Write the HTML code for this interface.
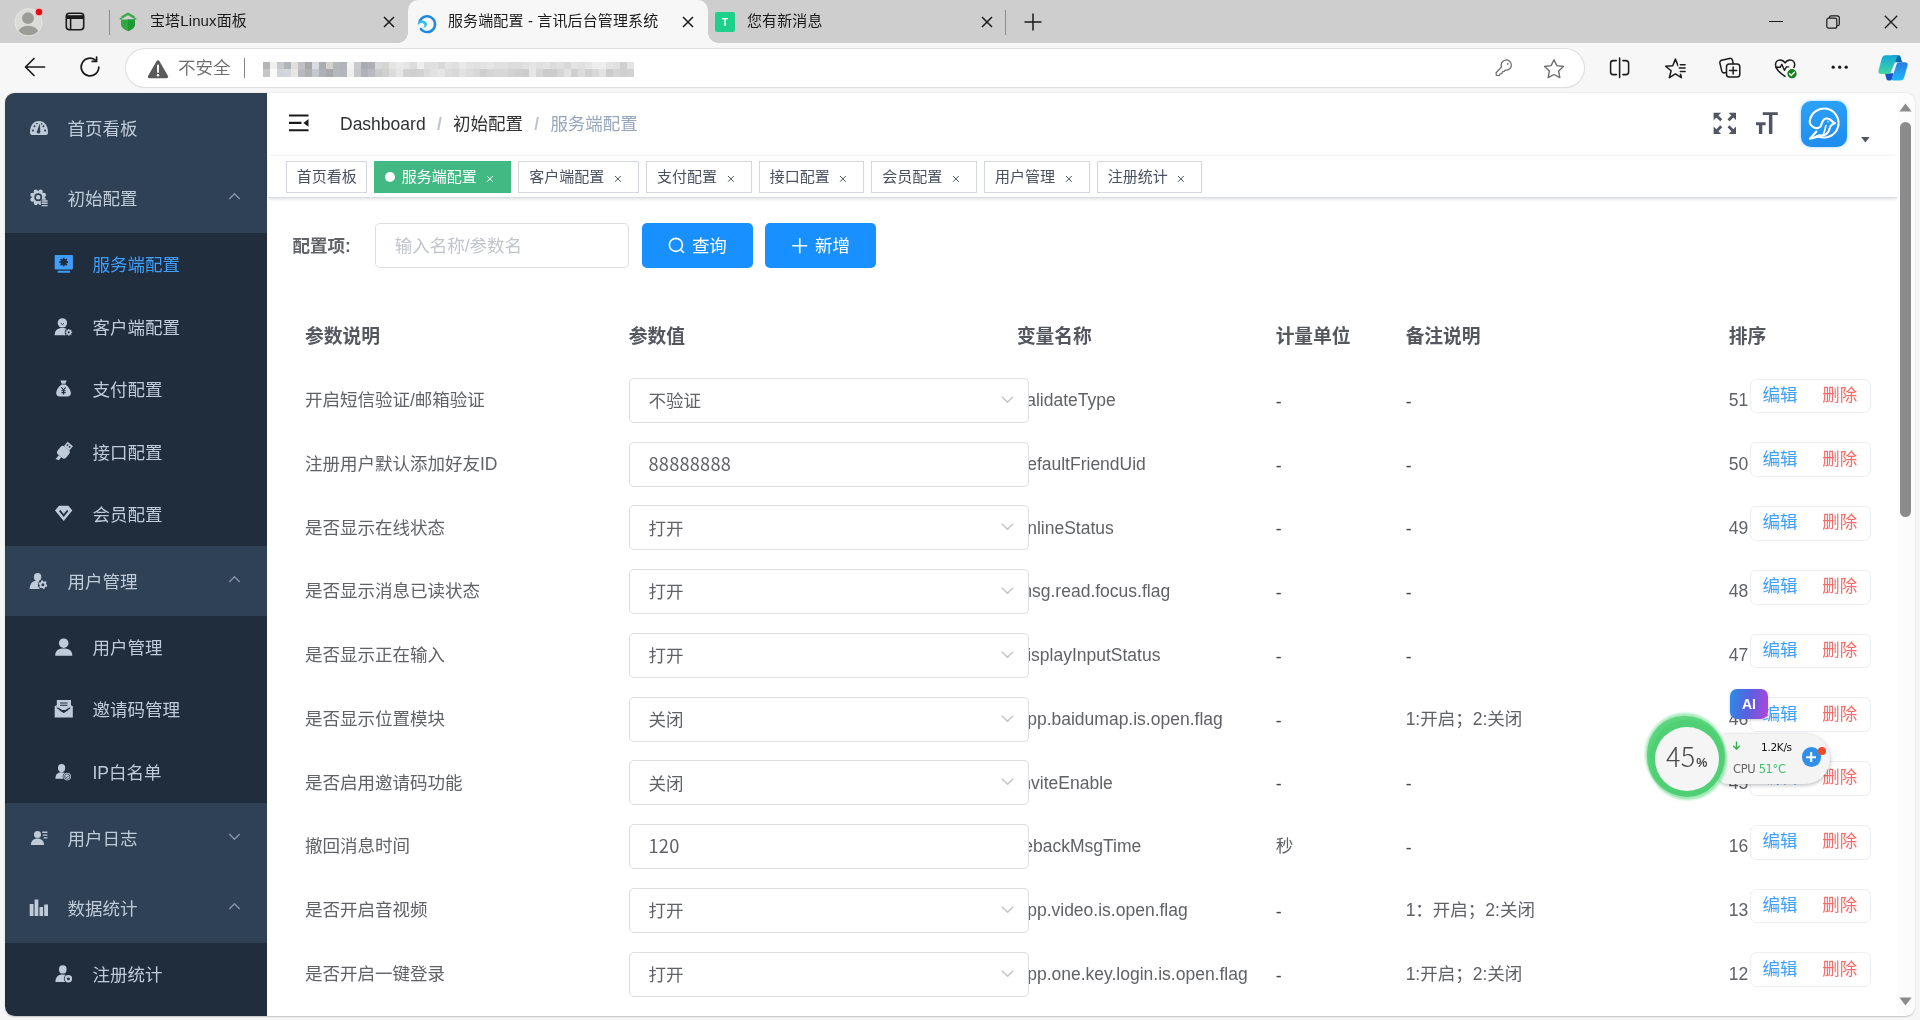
<!DOCTYPE html>
<html lang="zh-CN"><head><meta charset="utf-8"><title>服务端配置 - 言讯后台管理系统</title>
<style>
*{box-sizing:border-box;margin:0;padding:0}
html,body{width:1920px;height:1020px;overflow:hidden;background:#f6f6f6;font-family:"Liberation Sans","Noto Sans CJK SC",sans-serif;}
body{position:relative}
.abs{position:absolute}
/* ---------- browser chrome ---------- */
#tabstrip{position:absolute;left:0;top:0;width:1920px;height:43px;background:#cecece;will-change:transform}
#toolbar{position:absolute;left:0;top:43px;width:1920px;height:50px;background:#f7f7f7;will-change:transform}
.tabtitle{position:absolute;top:11px;font-size:15px;line-height:20px;color:#1b1b1b;white-space:nowrap;font-weight:400;letter-spacing:.12px}
#activetab{position:absolute;left:408px;top:0;width:300px;height:43px;background:#f7f7f7;border-radius:10px 10px 0 0}
#activetab:before,#activetab:after{content:"";position:absolute;bottom:0;width:10px;height:10px}
#activetab:before{left:-10px;background:radial-gradient(circle at 0 0,rgba(0,0,0,0) 9.5px,#f7f7f7 10px)}
#activetab:after{right:-10px;background:radial-gradient(circle at 100% 0,rgba(0,0,0,0) 9.5px,#f7f7f7 10px)}
#addr{will-change:transform;position:absolute;left:126px;top:49px;width:1458px;height:38px;border-radius:19px;background:#fff;box-shadow:0 0 0 1px #dedede, 0 1px 2px rgba(0,0,0,.06)}
#addr .unsafe{position:absolute;left:52px;top:7px;font-size:17.5px;line-height:24px;color:#6b6b6b;white-space:nowrap;font-weight:350}
#addr .sep{position:absolute;left:117.5px;top:9px;width:1px;height:20px;background:#858585}
#urlblur{position:absolute;left:137px;top:13px;width:371px;height:15px;filter:blur(.7px);overflow:hidden}
#urlblur i{position:absolute;display:block}
/* ---------- page ---------- */
#page{position:absolute;left:5px;top:93px;width:1910px;height:923px;border-radius:9.5px;overflow:hidden;background:#fff;box-shadow:0 .5px 1.5px rgba(0,0,0,.22)}
#z{position:absolute;left:0;top:0;width:1527.2px;height:737.6px;zoom:1.25;font-size:14px;color:#606266;font-weight:400;will-change:transform}
#side{position:absolute;left:0;top:0;width:209.4px;height:100%;background:#2f4155;color:#bfcbd9;font-weight:400}
.mi{position:relative;height:56px;line-height:56px;padding-left:20px;font-size:14px;white-space:nowrap}
.mi>span{position:relative;top:1px}
.mi svg.ic{display:inline-block;width:14px;height:14px;margin-right:16px;vertical-align:-2px;fill:currentColor;overflow:visible}
.sub{background:#1f2d3d}
.sub .mi{height:50px;line-height:50px;padding-left:40px}
.mi.act{color:#409eff}
.mi .arr{position:absolute;right:20px;top:50%;width:12px;height:12px;margin-top:-7px}
.mi .arr svg{display:block;width:12px;height:12px;fill:none;stroke:#8694a5;stroke-width:1.1}
#main{position:absolute;left:210px;top:0;width:1303.6px;height:100%;background:#fff}
#navbar{position:relative;height:50px;background:#fff;box-shadow:0 1px 4px rgba(0,21,41,.08)}
#bc{position:absolute;left:58px;top:0;line-height:50px;font-size:14px;white-space:nowrap;color:#303133}
#bc .s{margin:0 9px;color:#c0c4cc;font-weight:700}
#bc .last{color:#97a8be}
#tags{position:relative;height:34px;background:#fff;border-bottom:1px solid #d8dce5;box-shadow:0 1px 3px 0 rgba(0,0,0,.12),0 0 3px 0 rgba(0,0,0,.04);white-space:nowrap;font-size:0}
.tag{display:inline-block;position:relative;height:26px;line-height:24px;border:1px solid #d3d6dc;color:#495060;font-weight:400;background:#fff;padding:0 8px;font-size:12px;margin-left:5.73px;margin-top:4px;vertical-align:top}
.tag:first-child{margin-left:15px;padding:0 7.6px}
.tag.on{background:#42b983;color:#fff;border-color:#42b983}
.tag.on:before{content:"";background:#fff;display:inline-block;width:8px;height:8px;border-radius:50%;position:relative;margin-right:5px;top:0px}
.tag .t{position:relative;top:.4px}
.tag .x{display:inline-block;width:15.8px;height:16px;vertical-align:-4.5px;margin-left:3px;position:relative}
.tag .x svg{position:absolute;left:5.6px;top:7.2px;width:4.6px;height:4.6px;stroke:#495060;stroke-width:.85;fill:none;overflow:visible}
.tag.on .x svg{stroke:#fff}
#app{position:relative;padding:20px}
#form{position:relative;height:36px;white-space:nowrap}
#form .lbl{position:absolute;left:0;top:1px;line-height:36px;font-size:14px;font-weight:700;color:#606266}
#form .inp{position:absolute;left:66px;top:0;width:203px;height:36px;border:1px solid #dcdee3;border-radius:4px;line-height:34px;padding-top:1px;padding-left:15px;color:#c0c4cc;font-size:14px}
.btn{position:absolute;top:0;height:36px;width:89px;border-radius:4px;background:#1890ff;color:#fff;font-size:14px;line-height:36px;padding-top:.8px;text-align:center}
.btn svg{display:inline-block;vertical-align:-2px;margin-right:5px;width:14px;height:14px;fill:none;stroke:#fff;stroke-width:1.3}
/* table */
#tbl{position:absolute;left:20px;top:167.9px;width:1263.6px}
.th{position:absolute;top:0;height:53px;line-height:53px;padding-top:1.2px;font-weight:700;font-size:15px;color:#54575e;white-space:nowrap}
.row{position:absolute;left:0;width:100%;height:51px}
.c{position:absolute;top:0;height:51px;line-height:51px;white-space:nowrap;font-size:14px;color:#606266}
.inbox{position:absolute;left:269px;top:7px;width:320.4px;height:36px;border:1px solid #dcdee3;border-radius:4px;background:#fff;line-height:34px;padding-top:1px;padding-left:15px;font-size:14px;color:#606266}
.inbox.num{font-family:"Noto Sans CJK SC",sans-serif;font-size:14.6px;padding-top:0;line-height:32.4px;letter-spacing:.15px}
.c.hy{padding-top:1.3px;color:#474747}
.inbox svg{position:absolute;right:10.6px;top:10.3px;width:12px;height:12px;fill:none;stroke:#c2c4ca;stroke-width:1.1}
.ops{position:absolute;left:1165.6px;top:7.6px;width:97.4px;height:27.8px;border:1px solid #ebeef5;border-radius:5px;background:#fff;font-size:14px;line-height:22px;white-space:nowrap}
.ops .e{position:absolute;left:9.6px;top:1.7px;color:#409eff}
.ops .d{position:absolute;left:57.4px;top:1.7px;color:#f56c6c}
</style></head>
<body>
<div id="tabstrip">
  <!-- profile -->
  <svg class="abs" style="left:12px;top:5px;width:34px;height:34px" viewBox="12 4 34 34"><circle cx="28.5" cy="21.2" r="13.6" fill="#dbdbd8" stroke="#e6e6e3" stroke-width="1"/><clipPath id="pc"><circle cx="28.5" cy="21.2" r="13.1"/></clipPath><circle cx="28" cy="17.2" r="5.9" fill="#9b9b98"/><ellipse cx="28.2" cy="31.2" rx="10" ry="6.4" fill="#9b9b98" clip-path="url(#pc)"/><circle cx="39" cy="11" r="3.9" fill="#e50914" stroke="#f3dada" stroke-width=".9"/></svg>
  <!-- tab actions -->
  <svg class="abs" style="left:65px;top:12px;width:20px;height:19px" viewBox="0 0 20 19" fill="none" stroke="#1b1b1b" stroke-width="1.6"><rect x="1.3" y="1.3" width="17.4" height="16.4" rx="3.2"/><path d="M1.3 6.3h17.4M5.6 6.3v11.4"/><path d="M2 3.2h16v3H2z" fill="#1b1b1b" stroke="none"/></svg>
  <div class="abs" style="left:109px;top:10px;width:1px;height:25px;background:#8d8d8d"></div>
  <!-- tab1 -->
  <svg class="abs" style="left:118px;top:11px;width:20px;height:22px" viewBox="118 11 20 22"><path d="M119.8 19.1l8.2-4.6 8.2 4.6M121.5 16.8l6.5-3.6 6.5 3.6" fill="none" stroke="#3aa84a" stroke-width="1.3"/><path d="M121 19.6h14v4.7c0 3.3-3.5 5.6-7 6.9-3.5-1.3-7-3.6-7-6.9z" fill="#2fa843"/><path d="M128 19.6h7v4.7c0 3.3-3.5 5.6-7 6.9z" fill="#1f9838"/></svg>
  <div class="tabtitle" style="left:150px">宝塔Linux面板</div>
  <svg class="abs" style="left:383px;top:16px;width:12px;height:12px" viewBox="0 0 12 12"><path d="M1 1l10 10M11 1L1 11" stroke="#1b1b1b" stroke-width="1.5"/></svg>
  <!-- active tab -->
  <div id="activetab"></div>
  <svg class="abs" style="left:416px;top:12.5px;width:22px;height:22px" viewBox="0 0 20 20" fill="none"><path d="M3.2 8.2A7.2 7.2 0 1 1 4.4 14.6" stroke="#1b87e6" stroke-width="2.2" stroke-linecap="round"/><path d="M1.6 9.2c1.5-2.2 4-3 6.2-2 1.8.8 2.6 2.6 2 4.2-.5 1.4-2 2.2-3.6 1.9 1.2-.4 1.8-1.6 1.3-2.7-.5-1.2-2-1.7-3.4-1.3-1 .3-1.9 1-2.5 1.9z" fill="#35c1f1"/></svg>
  <div class="tabtitle" style="left:448px">服务端配置 - 言讯后台管理系统</div>
  <svg class="abs" style="left:682px;top:16px;width:12px;height:12px" viewBox="0 0 12 12"><path d="M1 1l10 10M11 1L1 11" stroke="#1b1b1b" stroke-width="1.5"/></svg>
  <!-- tab3 -->
  <div class="abs" style="left:715px;top:12px;width:20px;height:20px;border-radius:2px;background:#1ed18b;color:#fff;font-size:10px;font-weight:700;line-height:21px;text-align:center">T</div>
  <div class="tabtitle" style="left:747px">您有新消息</div>
  <svg class="abs" style="left:981px;top:16px;width:12px;height:12px" viewBox="0 0 12 12"><path d="M1 1l10 10M11 1L1 11" stroke="#1b1b1b" stroke-width="1.5"/></svg>
  <div class="abs" style="left:1005px;top:10px;width:1px;height:25px;background:#8d8d8d"></div>
  <svg class="abs" style="left:1024px;top:13px;width:18px;height:18px" viewBox="0 0 18 18"><path d="M9 .5v17M.5 9h17" stroke="#1b1b1b" stroke-width="1.5"/></svg>
  <!-- window controls -->
  <div class="abs" style="left:1769px;top:21px;width:14px;height:1.3px;background:#1b1b1b"></div>
  <svg class="abs" style="left:1826px;top:15px;width:14px;height:14px" viewBox="0 0 14 14" fill="none" stroke="#1b1b1b" stroke-width="1.2"><rect x=".8" y="3.2" width="10" height="10" rx="2"/><path d="M3.4 3V2.6C3.4 1.6 4.2.8 5.2.8h6c1.2 0 2.1.9 2.1 2.1v6c0 1-.8 1.8-1.8 1.8h-.4"/></svg>
  <svg class="abs" style="left:1884px;top:15px;width:14px;height:14px" viewBox="0 0 14 14"><path d="M.8.8l12.4 12.4M13.2.8L.8 13.2" stroke="#1b1b1b" stroke-width="1.3"/></svg>
</div>
<div id="toolbar">
  <svg class="abs" style="left:24px;top:14px;width:22px;height:20px" viewBox="0 0 22 20" fill="none" stroke="#1b1b1b" stroke-width="1.7" stroke-linecap="round" stroke-linejoin="round"><path d="M20.5 10H2M10 1.5L1.5 10l8.5 8.5"/></svg>
  <svg class="abs" style="left:79px;top:13px;width:22px;height:22px" viewBox="0 0 22 22" fill="none" stroke="#1b1b1b" stroke-width="1.7" stroke-linecap="round" stroke-linejoin="round"><path d="M19.8 11a8.8 8.8 0 1 1-2.8-6.4"/><path d="M17.6 1v4.4h-4.4" /></svg>
  <!-- right icons -->
  <svg class="abs" style="left:1600px;top:10px;width:40px;height:30px" viewBox="1600 53 40 30" fill="none" stroke="#1b1b1b" stroke-width="1.55" stroke-linecap="round"><path d="M1616.3 60.6h-3a2.7 2.7 0 0 0-2.7 2.7v8.6a2.7 2.7 0 0 0 2.7 2.7h3M1622.9 60.6h3a2.7 2.7 0 0 1 2.7 2.7v8.6a2.7 2.7 0 0 1-2.7 2.7h-3M1619.6 58v19.4"/></svg>
  <svg class="abs" style="left:1655px;top:10px;width:40px;height:30px" viewBox="1655 53 40 30" fill="none" stroke="#1b1b1b" stroke-width="1.5" stroke-linejoin="round" stroke-linecap="round"><path d="M1675.40 59.10L1678.05 65.76L1685.20 66.22L1679.68 70.79L1681.45 77.73L1675.40 73.90L1669.35 77.73L1671.12 70.79L1665.60 66.22L1672.75 65.76Z"/><path d="M1678.3 62.3h9v11.4h-9z" fill="#f7f7f7" stroke="none"/><path d="M1680.3 64.7h4.8M1679.3 68.1h5.8M1680.3 71.5h4.8"/></svg>
  <svg class="abs" style="left:1710px;top:10px;width:40px;height:30px" viewBox="1710 53 40 30" fill="none" stroke="#1b1b1b" stroke-width="1.5" stroke-linecap="round" stroke-linejoin="round"><path d="M1726.3 72.4l-1.7.4a2.3 2.3 0 0 1-2.8-1.7l-1.9-8a2.3 2.3 0 0 1 1.7-2.8l8-1.9a2.3 2.3 0 0 1 2.8 1.7l.8 3.3"/><rect x="1726.5" y="63.9" width="13.3" height="13.1" rx="2.8"/><path d="M1733.15 66.9v7.2M1729.55 70.5h7.2"/></svg>
  <svg class="abs" style="left:1765px;top:10px;width:40px;height:30px" viewBox="1765 53 40 30" fill="none" stroke="#1b1b1b" stroke-width="1.5" stroke-linecap="round" stroke-linejoin="round"><path d="M1785.1 76.3c-4-2.6-9.6-7.2-9.6-11.6 0-2.7 2-4.8 4.6-4.8 2 0 3.8 1.2 5 3 1.2-1.8 3-3 5-3 2.6 0 4.6 2.1 4.6 4.8 0 1-.3 2-.8 3"/><path d="M1776 67.3h4.2l1.6-3 2.6 6 2-3.4h2.2" stroke-width="1.4"/><circle cx="1792" cy="73.7" r="5.2" fill="#13801d" stroke="#f7f7f7" stroke-width="1.1"/><path d="M1789.6 73.8l1.7 1.7 3.1-3.3" stroke="#fff" stroke-width="1.4"/></svg>
  <svg class="abs" style="left:1825px;top:10px;width:30px;height:30px" viewBox="1825 53 30 30"><circle cx="1833.2" cy="67.2" r="1.65" fill="#1b1b1b"/><circle cx="1839.7" cy="67.2" r="1.65" fill="#1b1b1b"/><circle cx="1846.2" cy="67.2" r="1.65" fill="#1b1b1b"/></svg>
  <!-- copilot -->
  <svg class="abs" style="left:1874px;top:9px;width:38px;height:32px" viewBox="1874 52 38 32"><defs><linearGradient id="cpa" x1="0" y1="0" x2="0" y2="1"><stop offset="0" stop-color="#12a6da"/><stop offset="1" stop-color="#41d8a0"/></linearGradient><linearGradient id="cpb" x1="0" y1="0" x2="0" y2="1"><stop offset="0" stop-color="#2b7de0"/><stop offset="1" stop-color="#1cb6f6"/></linearGradient></defs>
  <path d="M1892.5 55.2h6c1.2 0 1.8.7 2.1 1.7l1 3.6c.3 1 1 1.8 2.4 1.8h-10l-3.5-2z" fill="#0b6ba8"/>
  <path d="M1884.9 73.3h8.6l-1.3 5.2c-.4 1.4-1.3 2-2.6 2h-1c-1.2 0-1.9-.6-2.2-1.7z" fill="#1a4fc6"/>
  <path d="M1885.8 55.2h10.4c1 0 1.4.6 1.1 1.5l-6.3 15c-.6 1.5-1.6 2.2-3.1 2.2h-6.9c-2 0-3-1.2-2.5-3.2l3.3-12.2c.6-2.1 1.8-3.3 4-3.3z" fill="url(#cpa)"/>
  <path d="M1899.2 62.3h5.8c2.2 0 3.1 1.3 2.5 3.4l-3.4 11.8c-.6 2-1.7 3-3.8 3h-7.3c-1 0-1.4-.7-1.1-1.7l4.6-14.3c.5-1.5 1.4-2.2 2.7-2.2z" fill="url(#cpb)"/></svg>
</div>
<div id="addr">
  <svg class="abs" style="left:21px;top:10px;width:22px;height:20px" viewBox="0 0 22 20"><path d="M11 1.2c.7 0 1.2.4 1.5 1L21 17c.6 1.1-.2 2.3-1.5 2.3h-17C1.2 19.3.4 18.1 1 17L9.5 2.2c.3-.6.8-1 1.5-1z" fill="#5a5a5a"/><path d="M11 6.5v6.5" stroke="#fff" stroke-width="2" stroke-linecap="round"/><circle cx="11" cy="16.2" r="1.2" fill="#fff"/></svg>
  <div class="unsafe">不安全</div>
  <div class="sep"></div>
  <div id="urlblur">
    <i style="left:0px;top:0;width:7.1px;height:7.6px;background:#b5b5b8"></i><i style="left:0px;top:7.4px;width:7.1px;height:7.6px;background:#c6c6c8"></i><i style="left:7px;top:0;width:7.1px;height:7.6px;background:#f0f0ee"></i><i style="left:7px;top:7.4px;width:7.1px;height:7.6px;background:#fafafa"></i><i style="left:14px;top:0;width:7.1px;height:7.6px;background:#c5c8cc"></i><i style="left:14px;top:7.4px;width:7.1px;height:7.6px;background:#d0d3d8"></i><i style="left:21px;top:0;width:7.1px;height:7.6px;background:#b0b3b8"></i><i style="left:21px;top:7.4px;width:7.1px;height:7.6px;background:#d3d6db"></i><i style="left:28px;top:0;width:7.1px;height:7.6px;background:#e0deda"></i><i style="left:28px;top:7.4px;width:7.1px;height:7.6px;background:#e8e6e0"></i><i style="left:35px;top:0;width:7.1px;height:7.6px;background:#c0c0c4"></i><i style="left:35px;top:7.4px;width:7.1px;height:7.6px;background:#b8babf"></i><i style="left:42px;top:0;width:7.1px;height:7.6px;background:#a8a8a8"></i><i style="left:42px;top:7.4px;width:7.1px;height:7.6px;background:#b0b0ae"></i><i style="left:49px;top:0;width:7.1px;height:7.6px;background:#d8dce2"></i><i style="left:49px;top:7.4px;width:7.1px;height:7.6px;background:#c5c9cf"></i><i style="left:56px;top:0;width:7.1px;height:7.6px;background:#a9adb3"></i><i style="left:56px;top:7.4px;width:7.1px;height:7.6px;background:#aeb1b8"></i><i style="left:63px;top:0;width:7.1px;height:7.6px;background:#d5d3d0"></i><i style="left:63px;top:7.4px;width:7.1px;height:7.6px;background:#a9a9ab"></i><i style="left:70px;top:0;width:7.1px;height:7.6px;background:#b3b6bb"></i><i style="left:70px;top:7.4px;width:7.1px;height:7.6px;background:#b5b8bd"></i><i style="left:77px;top:0;width:7.1px;height:7.6px;background:#b0b4ba"></i><i style="left:77px;top:7.4px;width:7.1px;height:7.6px;background:#b3b7bc"></i><i style="left:84px;top:0;width:7.1px;height:7.6px;background:#f3f3f0"></i><i style="left:84px;top:7.4px;width:7.1px;height:7.6px;background:#efefed"></i><i style="left:91px;top:0;width:7.1px;height:7.6px;background:#c8cacd"></i><i style="left:91px;top:7.4px;width:7.1px;height:7.6px;background:#c5c7cc"></i><i style="left:98px;top:0;width:7.1px;height:7.6px;background:#a9abb3"></i><i style="left:98px;top:7.4px;width:7.1px;height:7.6px;background:#b0b2b8"></i><i style="left:105px;top:0;width:7.1px;height:7.6px;background:#aeb0b6"></i><i style="left:105px;top:7.4px;width:7.1px;height:7.6px;background:#b8babf"></i><i style="left:112px;top:0;width:7.1px;height:7.6px;background:#d8dadd"></i><i style="left:112px;top:7.4px;width:7.1px;height:7.6px;background:#c8cacc"></i><i style="left:119px;top:0;width:7.1px;height:7.6px;background:#d5d5d3"></i><i style="left:119px;top:7.4px;width:7.1px;height:7.6px;background:#d0d0ce"></i><i style="left:126px;top:0;width:7.1px;height:7.6px;background:#e5e5e5"></i><i style="left:126px;top:7.4px;width:7.1px;height:7.6px;background:#dcdcdc"></i><i style="left:133px;top:0;width:7.1px;height:7.6px;background:#eaeaea"></i><i style="left:133px;top:7.4px;width:7.1px;height:7.6px;background:#e6e6e6"></i><i style="left:140px;top:0;width:7.1px;height:7.6px;background:#e6e6e6"></i><i style="left:140px;top:7.4px;width:7.1px;height:7.6px;background:#d2d2d2"></i><i style="left:147px;top:0;width:7.1px;height:7.6px;background:#dcdcdc"></i><i style="left:147px;top:7.4px;width:7.1px;height:7.6px;background:#cfcfcf"></i><i style="left:154px;top:0;width:7.1px;height:7.6px;background:#eeeeee"></i><i style="left:154px;top:7.4px;width:7.1px;height:7.6px;background:#d2d2d2"></i><i style="left:161px;top:0;width:7.1px;height:7.6px;background:#e0e0e0"></i><i style="left:161px;top:7.4px;width:7.1px;height:7.6px;background:#dcdcdc"></i><i style="left:168px;top:0;width:7.1px;height:7.6px;background:#e0e0e0"></i><i style="left:168px;top:7.4px;width:7.1px;height:7.6px;background:#e2e2e2"></i><i style="left:175px;top:0;width:7.1px;height:7.6px;background:#d8d8d8"></i><i style="left:175px;top:7.4px;width:7.1px;height:7.6px;background:#e6e6e6"></i><i style="left:182px;top:0;width:7.1px;height:7.6px;background:#e3e3e3"></i><i style="left:182px;top:7.4px;width:7.1px;height:7.6px;background:#dcdcdc"></i><i style="left:189px;top:0;width:7.1px;height:7.6px;background:#e0e0e0"></i><i style="left:189px;top:7.4px;width:7.1px;height:7.6px;background:#d8d8d8"></i><i style="left:196px;top:0;width:7.1px;height:7.6px;background:#eaeaea"></i><i style="left:196px;top:7.4px;width:7.1px;height:7.6px;background:#e2e2e2"></i><i style="left:203px;top:0;width:7.1px;height:7.6px;background:#e3e3e3"></i><i style="left:203px;top:7.4px;width:7.1px;height:7.6px;background:#dcdcdc"></i><i style="left:210px;top:0;width:7.1px;height:7.6px;background:#e0e0e0"></i><i style="left:210px;top:7.4px;width:7.1px;height:7.6px;background:#d8d8d8"></i><i style="left:217px;top:0;width:7.1px;height:7.6px;background:#e3e3e3"></i><i style="left:217px;top:7.4px;width:7.1px;height:7.6px;background:#cfcfcf"></i><i style="left:224px;top:0;width:7.1px;height:7.6px;background:#e6e6e6"></i><i style="left:224px;top:7.4px;width:7.1px;height:7.6px;background:#d5d5d5"></i><i style="left:231px;top:0;width:7.1px;height:7.6px;background:#e0e0e0"></i><i style="left:231px;top:7.4px;width:7.1px;height:7.6px;background:#d8d8d8"></i><i style="left:238px;top:0;width:7.1px;height:7.6px;background:#e0e0e0"></i><i style="left:238px;top:7.4px;width:7.1px;height:7.6px;background:#d8d8d8"></i><i style="left:245px;top:0;width:7.1px;height:7.6px;background:#dcdcdc"></i><i style="left:245px;top:7.4px;width:7.1px;height:7.6px;background:#d2d2d2"></i><i style="left:252px;top:0;width:7.1px;height:7.6px;background:#dcdcdc"></i><i style="left:252px;top:7.4px;width:7.1px;height:7.6px;background:#cfcfcf"></i><i style="left:259px;top:0;width:7.1px;height:7.6px;background:#e0e0e0"></i><i style="left:259px;top:7.4px;width:7.1px;height:7.6px;background:#cccccc"></i><i style="left:266px;top:0;width:7.1px;height:7.6px;background:#e6e6e6"></i><i style="left:266px;top:7.4px;width:7.1px;height:7.6px;background:#e6e6e6"></i><i style="left:273px;top:0;width:7.1px;height:7.6px;background:#e0e0e0"></i><i style="left:273px;top:7.4px;width:7.1px;height:7.6px;background:#d5d5d5"></i><i style="left:280px;top:0;width:7.1px;height:7.6px;background:#e3e3e3"></i><i style="left:280px;top:7.4px;width:7.1px;height:7.6px;background:#cccccc"></i><i style="left:287px;top:0;width:7.1px;height:7.6px;background:#dcdcdc"></i><i style="left:287px;top:7.4px;width:7.1px;height:7.6px;background:#cccccc"></i><i style="left:294px;top:0;width:7.1px;height:7.6px;background:#e0e0e0"></i><i style="left:294px;top:7.4px;width:7.1px;height:7.6px;background:#d5d5d5"></i><i style="left:301px;top:0;width:7.1px;height:7.6px;background:#d8d8d8"></i><i style="left:301px;top:7.4px;width:7.1px;height:7.6px;background:#e2e2e2"></i><i style="left:308px;top:0;width:7.1px;height:7.6px;background:#e3e3e3"></i><i style="left:308px;top:7.4px;width:7.1px;height:7.6px;background:#cfcfcf"></i><i style="left:315px;top:0;width:7.1px;height:7.6px;background:#e0e0e0"></i><i style="left:315px;top:7.4px;width:7.1px;height:7.6px;background:#dcdcdc"></i><i style="left:322px;top:0;width:7.1px;height:7.6px;background:#e6e6e6"></i><i style="left:322px;top:7.4px;width:7.1px;height:7.6px;background:#cfcfcf"></i><i style="left:329px;top:0;width:7.1px;height:7.6px;background:#eeeeee"></i><i style="left:329px;top:7.4px;width:7.1px;height:7.6px;background:#d8d8d8"></i><i style="left:336px;top:0;width:7.1px;height:7.6px;background:#eeeeee"></i><i style="left:336px;top:7.4px;width:7.1px;height:7.6px;background:#e2e2e2"></i><i style="left:343px;top:0;width:7.1px;height:7.6px;background:#e3e3e3"></i><i style="left:343px;top:7.4px;width:7.1px;height:7.6px;background:#cccccc"></i><i style="left:350px;top:0;width:7.1px;height:7.6px;background:#e0e0e0"></i><i style="left:350px;top:7.4px;width:7.1px;height:7.6px;background:#d5d5d5"></i><i style="left:357px;top:0;width:7.1px;height:7.6px;background:#d0d0d0"></i><i style="left:357px;top:7.4px;width:7.1px;height:7.6px;background:#cfcfd2"></i><i style="left:364px;top:0;width:7.1px;height:7.6px;background:#e4e4e4"></i><i style="left:364px;top:7.4px;width:7.1px;height:7.6px;background:#d2d2d2"></i>
  </div>
  <svg class="abs" style="left:1360px;top:4px;width:30px;height:30px" viewBox="1360 4 30 30" fill="none" stroke="#6e6e6e" stroke-width="1.25" stroke-linecap="round" stroke-linejoin="round"><path d="M1375.5 18L1370.1 23.8 1370.3 26.3 1373.5 26.5 1374.1 24.8 1375.8 24.7 1376.4 22.9 1378.2 22.4 1379.2 21.1A5.1 5.1 0 1 0 1375.5 18z"/><circle cx="1381.7" cy="14.9" r=".85" fill="#6e6e6e" stroke="none"/></svg>
  <svg class="abs" style="left:1413px;top:5px;width:30px;height:30px" viewBox="1413 5 30 30" fill="none" stroke="#6e6e6e" stroke-width="1.4" stroke-linejoin="round"><path d="M1428.00 10.70L1430.88 16.64L1437.42 17.54L1432.66 22.11L1433.82 28.61L1428.00 25.50L1422.18 28.61L1423.34 22.11L1418.58 17.54L1425.12 16.64Z"/></svg>
</div>

<div id="page"><div id="z"><div id="side"><div class="mi "><svg class="ic" viewBox="0 0 17.5 17.5" ><path d="M0 13.5C0 6.2 3.6 2 9 2s9 4.2 9 11.500000c0 1.5-.8 2.5-2 2.5H2c-1.2 0-2-1-2-2.5z"/><g fill="#304156"><circle cx="2.9" cy="11.6" r="1.05"/><circle cx="4.5" cy="7.2" r="1.05"/><circle cx="13.5" cy="7.2" r="1.05"/><circle cx="15.1" cy="11.6" r="1.05"/><circle cx="7" cy="4.6" r=".8"/><circle cx="11.6" cy="4.9" r=".8"/><path d="M9.9 4.300000L10.3 12.500000a1.7 1.7 0 1 1-3.2-.5z"/></g></svg><span>首页看板</span></div><div class="mi "><svg class="ic" viewBox="0 0 17.5 17.5" ><circle cx="8.2" cy="8.3" r="6.3"/><circle cx="13.93" cy="10.67" r="2.15"/><circle cx="10.57" cy="14.03" r="2.15"/><circle cx="5.83" cy="14.03" r="2.15"/><circle cx="2.47" cy="10.67" r="2.15"/><circle cx="2.47" cy="5.93" r="2.15"/><circle cx="5.83" cy="2.57" r="2.15"/><circle cx="10.57" cy="2.57" r="2.15"/><circle cx="13.93" cy="5.93" r="2.15"/><circle cx="8.2" cy="8.3" r="3.1" fill="none" stroke="#304156" stroke-width="1.7"/><path d="M10.8 10.700000H18.500000V18H10.800000z" fill="#304156"/><path d="M11.7 11.300000h5.900000v1.400000h-5.900000zM11.7 13.600000h5.900000v1.400000h-5.900000zM11.7 15.900000h5.900000v1.400000h-5.900000z"/></svg><span>初始配置</span><span class="arr"><svg viewBox="0 0 12 12"><path d="M1.8 8L6 3.8 10.2 8"/></svg></span></div><div class="sub"><div class="mi act"><svg class="ic" viewBox="0 0 17.5 17.5" ><rect x="-.3" y="0" width="18.2" height="14.4" rx=".8"/><rect x="2.6" y="15.8" width="12.4" height="1.9" rx=".3"/><path d="M13.13 6.31L13.13 7.89L11.80 7.91L11.46 8.72L12.39 9.67L11.27 10.79L10.32 9.86L9.51 10.20L9.49 11.53L7.91 11.53L7.89 10.20L7.08 9.86L6.13 10.79L5.01 9.67L5.94 8.72L5.60 7.91L4.27 7.89L4.27 6.31L5.60 6.29L5.94 5.48L5.01 4.53L6.13 3.41L7.08 4.34L7.89 4.00L7.91 2.67L9.49 2.67L9.51 4.00L10.32 4.34L11.27 3.41L12.39 4.53L11.46 5.48L11.80 6.29Z" fill="#1f2d3d"/></svg><span>服务端配置</span></div><div class="mi "><svg class="ic" viewBox="0 0 17.5 17.5" ><circle cx="7.4" cy="4.9" r="4.7"/><path d="M-.3 17.200000C-.3 12.6 2.5 10.1 7.4 10.100000c4.6 0 7.6 1.9 9.4 7.100000z"/><path d="M5.8 5.300000l1.6 1.3 1.6-1.3" fill="none" stroke="#1f2d3d" stroke-width=".9"/><circle cx="13.8" cy="14.3" r="4" fill="#1f2d3d"/><path d="M17.15 13.70L17.15 14.90L16.22 14.93L15.96 15.56L16.59 16.24L15.74 17.09L15.06 16.46L14.43 16.72L14.40 17.65L13.20 17.65L13.17 16.72L12.54 16.46L11.86 17.09L11.01 16.24L11.64 15.56L11.38 14.93L10.45 14.90L10.45 13.70L11.38 13.67L11.64 13.04L11.01 12.36L11.86 11.51L12.54 12.14L13.17 11.88L13.20 10.95L14.40 10.95L14.43 11.88L15.06 12.14L15.74 11.51L16.59 12.36L15.96 13.04L16.22 13.67Z"/><circle cx="13.8" cy="14.3" r="1.1" fill="#1f2d3d"/></svg><span>客户端配置</span></div><div class="mi "><svg class="ic" viewBox="0 0 17.5 17.5" ><path d="M5.4.5h6.300000l-1.4 3.200000H6.800000z"/><path d="M6.6 4.400000h3.900000c3 2.1 5.4 5.6 5.4 8.6 0 2.2-1.4 3.4-3.4 3.400000H4.600000c-2 0-3.4-1.2-3.4-3.4 0-3 2.4-6.5 5.4-8.600000z"/><path d="M6.4 7.300000l2.15 2.8 2.15-2.800000M8.55 10.100000v4.300000M6.5 10.800000h4.100000M6.5 12.600000h4.1" stroke="#1f2d3d" stroke-width="1.05" fill="none"/></svg><span>支付配置</span></div><div class="mi "><svg class="ic" viewBox="0 0 17.5 17.5" ><g transform="rotate(40 8.75 8.75)"><path d="M5.3 -1.300000h7v5.500000h-7z"/><rect x="3.2" y="4.2" width="11.2" height="10.3" rx="3.2"/><path d="M7.2 14.500000h3.200000v3.900000l-3.2 1.200000z"/><rect x="6.6" y=".4" width="1.5" height="1.7" fill="#1f2d3d"/><rect x="9.5" y=".4" width="1.5" height="1.7" fill="#1f2d3d"/></g></svg><span>接口配置</span></div><div class="mi "><svg class="ic" viewBox="0 0 17.5 17.5" ><path d="M4 .7h9.500000l3.8 4.900000L8.7 16 0 5.600000z"/><path d="M4.7 5.500000l4 5 4-5" stroke="#1f2d3d" stroke-width="1.9" fill="none"/></svg><span>会员配置</span></div></div><div class="mi "><svg class="ic" viewBox="0 0 17.5 17.5" ><ellipse cx="7.6" cy="5.1" rx="3.7" ry="4.1"/><path d="M-.4 17c.2-4.6 2-7.4 5.8-8.300000h4.200000c1.5.5 2.5 1.2 3.3 2.300000L10 17z"/><circle cx="12.9" cy="12.7" r="5.1" fill="#304156"/><circle cx="16.05" cy="13.68" r="1.15"/><circle cx="13.63" cy="15.92" r="1.15"/><circle cx="10.48" cy="14.94" r="1.15"/><circle cx="9.75" cy="11.72" r="1.15"/><circle cx="12.17" cy="9.48" r="1.15"/><circle cx="15.32" cy="10.46" r="1.15"/><circle cx="12.9" cy="12.7" r="3.3"/><circle cx="12.9" cy="12.7" r="1.5" fill="#304156"/></svg><span>用户管理</span><span class="arr"><svg viewBox="0 0 12 12"><path d="M1.8 8L6 3.8 10.2 8"/></svg></span></div><div class="sub"><div class="mi "><svg class="ic" viewBox="0 0 17.5 17.5" ><circle cx="8.7" cy="5.2" r="4.8"/><path d="M.2 17.700000c0-4.7 2.8-7.2 8.5-7.200000s8.6 2.5 8.6 7.200000z"/></svg><span>用户管理</span></div><div class="mi "><svg class="ic" viewBox="0 0 17.5 17.5" ><path d="M1.8 0h14.200000v10H1.800000z"/><path d="M-.3 6.300000L1.8 5v3.600000l6.95 4.400000L15.7 8.600000V5l2.1 1.300000V17.600000H-.3z"/><path d="M5 3h7.500000M5 5.200000h7.5" stroke="#1f2d3d" stroke-width="1.1"/><path d="M2.3 7.800000l6.45 4.1 6.45-4.1" stroke="#1f2d3d" stroke-width="1.3" fill="none"/></svg><span>邀请码管理</span></div><div class="mi "><svg class="ic" viewBox="0 0 17.5 17.5" ><ellipse cx="6.6" cy="5.1" rx="3.6" ry="4.1"/><path d="M.4 15.800000c0-4.3 2.1-6.6 6.2-6.6 2.4 0 3.9.8 4.9 1.800000L9 15.800000z"/><circle cx="12.2" cy="13.6" r="4.5" fill="#1f2d3d"/><circle cx="12.2" cy="13.6" r="3.8"/><circle cx="12.2" cy="13.6" r="2.7" fill="none" stroke="#1f2d3d" stroke-width=".7"/><path d="M10.8 13.600000l1.1 1.1 1.9-2.1" stroke="#1f2d3d" stroke-width=".8" fill="none"/></svg><span>IP白名单</span></div></div><div class="mi "><svg class="ic" viewBox="0 0 17.5 17.5" ><circle cx="7.5" cy="5.6" r="3.5"/><path d="M.9 16.100000c0-4.1 2.6-6.5 6.6-6.500000s6.5 2.4 6.5 6.500000z"/><path d="M12.3 2.600000h5.100000v1.400000h-5.100000zM12.8 5.400000h4.600000v1.400000h-4.600000zM13.6 8.200000h3.800000v1.400000h-3.800000z"/></svg><span>用户日志</span><span class="arr"><svg viewBox="0 0 12 12"><path d="M1.8 4L6 8.2 10.2 4"/></svg></span></div><div class="mi "><svg class="ic" viewBox="0 0 17.5 17.5" ><path d="M-.3 5h3.800000v12H-.3zM4.6.5h3.700000V17H4.600000zM9.5 8h3.600000v9H9.500000zM14.2 5.500000H18V17h-3.800000z"/></svg><span>数据统计</span><span class="arr"><svg viewBox="0 0 12 12"><path d="M1.8 8L6 3.8 10.2 8"/></svg></span></div><div class="sub" style="height:200px"><div class="mi "><svg class="ic" viewBox="0 0 17.5 17.5" ><ellipse cx="7.8" cy="4.4" rx="3.8" ry="4.2"/><path d="M.4 17.100000c0-5.1 2.6-7.7 7.4-7.7 2.7 0 4.5.9 5.7 2.100000L10 17.100000z"/><circle cx="13.4" cy="13.7" r="4.5" fill="#1f2d3d"/><circle cx="13.4" cy="13.7" r="3.7"/><circle cx="13.4" cy="13.9" r="1.4" fill="#1f2d3d"/></svg><span>注册统计</span></div></div></div><div id="main"><div id="navbar">
<svg class="abs" style="left:16.8px;top:17px;width:16px;height:14.6px" viewBox="0 0 17 15" preserveAspectRatio="none"><path d="M0 1.2h16.6M0 7.3h10.6M0 13.4h16.6" stroke="#1a1a1a" stroke-width="1.7" fill="none"/><path d="M16.6 4.1v6.4l-4.4-3.2z" fill="#1a1a1a"/></svg>
<div id="bc"><span>Dashboard</span><span class="s">/</span><span>初始配置</span><span class="s">/</span><span class="last">服务端配置</span></div>
<svg class="abs" style="left:1156px;top:15px;width:19px;height:18px" viewBox="0 0 19 18"><g fill="#4f5661"><path d="M.5.5h6L4.3 2.7l3.1 3.1-1.6 1.6-3.1-3.1L.5 6.5z"/><path d="M18.5.5v6l-2.2-2.2-3.1 3.1-1.6-1.6 3.1-3.1L12.5.5z"/><path d="M.5 17.5v-6l2.2 2.2 3.1-3.1 1.6 1.6-3.1 3.1L6.5 17.5z"/><path d="M18.5 17.5h-6l2.2-2.2-3.1-3.1 1.6-1.6 3.1 3.1 2.2-2.2z"/></g></svg>
<svg class="abs" style="left:1190px;top:15.2px;width:19.2px;height:19.2px" viewBox="0 0 24 24"><g fill="#4f5560"><path d="M7.8.2h15v2.9h-5.4v18.8h-3.5V3.1H7.8z"/><path d="M1 10.2h9.6v3H7.3v8.7H3.9v-8.7H1z"/></g></svg>
<div class="abs" style="left:1226.6px;top:6.6px;width:36.6px;height:36.6px;border-radius:8px;background:linear-gradient(170deg,#2ba3f8,#1f8bef);box-shadow:0 0 2px .6px rgba(120,200,255,.45)">
<svg style="position:absolute;left:0;top:0;width:36.6px;height:36.6px" viewBox="0 0 45.5 45.5" fill="none" stroke="#fff" stroke-width="2.1" stroke-linecap="round" stroke-linejoin="round"><path d="M22 19.6C20.6 21 20.5 23.4 19.7 24.8 18.6 26.8 15.6 27.6 13 26.3 10.4 25 8.8 23 8.6 20.6A14.4 14.4 0 1 1 17 35"/><path d="M22 19.6C23 17.4 26 16.7 28.3 18.1 30 19.2 31.5 21 33.8 22L30.6 23.6C29 25 28.5 26.5 28 28.5 27.3 31.3 25.5 33 23 33.7L8.9 37.6 15.3 30.4"/><path d="M24.9 24.4C23.6 27 24.2 30 22.4 32.2M13.5 35.8L18.8 33.6" stroke-width="1.6"/><circle cx="26.8" cy="20.5" r=".9" fill="#cfeaff" stroke="none"/></svg></div>
<svg class="abs" style="left:1275.1px;top:34.8px;width:7px;height:4.8px" viewBox="0 0 7 5"><path d="M0 0h7L3.5 4.6z" fill="#4f5661"/></svg>
</div><div id="tags"><span class="tag"><span class="t">首页看板</span></span><span class="tag on"><span class="t">服务端配置</span><span class="x"><svg viewBox="0 0 5 5"><path d="M0 0l5 5M5 0L0 5"/></svg></span></span><span class="tag"><span class="t">客户端配置</span><span class="x"><svg viewBox="0 0 5 5"><path d="M0 0l5 5M5 0L0 5"/></svg></span></span><span class="tag"><span class="t">支付配置</span><span class="x"><svg viewBox="0 0 5 5"><path d="M0 0l5 5M5 0L0 5"/></svg></span></span><span class="tag"><span class="t">接口配置</span><span class="x"><svg viewBox="0 0 5 5"><path d="M0 0l5 5M5 0L0 5"/></svg></span></span><span class="tag"><span class="t">会员配置</span><span class="x"><svg viewBox="0 0 5 5"><path d="M0 0l5 5M5 0L0 5"/></svg></span></span><span class="tag"><span class="t">用户管理</span><span class="x"><svg viewBox="0 0 5 5"><path d="M0 0l5 5M5 0L0 5"/></svg></span></span><span class="tag"><span class="t">注册统计</span><span class="x"><svg viewBox="0 0 5 5"><path d="M0 0l5 5M5 0L0 5"/></svg></span></span></div><div id="app"><div id="form"><span class="lbl">配置项:</span><div class="inp">输入名称/参数名</div>
<div class="btn" style="left:279.5px"><svg viewBox="0 0 14 14"><circle cx="6.3" cy="6.3" r="5.2"/><path d="M10.2 10.2l2.6 2.6"/></svg>查询</div>
<div class="btn" style="left:378px"><svg viewBox="0 0 14 14"><path d="M7 1v12M1 7h12"/></svg>新增</div></div></div><div id="tbl"><div class="th" style="left:10px">参数说明</div><div class="th" style="left:269px">参数值</div><div class="th" style="left:579.5px">变量名称</div><div class="th" style="left:786.5px">计量单位</div><div class="th" style="left:890.5px">备注说明</div><div class="th" style="left:1149px">排序</div><div class="row" style="top:53px"><div class="c" style="left:10px">开启短信验证/邮箱验证</div><div class="c" style="left:579.95px">validateType</div><div class="inbox">不验证<svg viewBox="0 0 12 12"><path d="M1.5 3.8L6 8.2l4.5-4.4"/></svg></div><div class="c hy" style="left:786.5px">-</div><div class="c hy" style="left:890.5px">-</div><div class="c" style="left:1149px">51</div><div class="ops"><span class="e">编辑</span><span class="d">删除</span></div></div><div class="row" style="top:104px"><div class="c" style="left:10px">注册用户默认添加好友ID</div><div class="c" style="left:579.95px">defaultFriendUid</div><div class="inbox num">88888888</div><div class="c hy" style="left:786.5px">-</div><div class="c hy" style="left:890.5px">-</div><div class="c" style="left:1149px">50</div><div class="ops"><span class="e">编辑</span><span class="d">删除</span></div></div><div class="row" style="top:155px"><div class="c" style="left:10px">是否显示在线状态</div><div class="c" style="left:579.95px">onlineStatus</div><div class="inbox">打开<svg viewBox="0 0 12 12"><path d="M1.5 3.8L6 8.2l4.5-4.4"/></svg></div><div class="c hy" style="left:786.5px">-</div><div class="c hy" style="left:890.5px">-</div><div class="c" style="left:1149px">49</div><div class="ops"><span class="e">编辑</span><span class="d">删除</span></div></div><div class="row" style="top:206px"><div class="c" style="left:10px">是否显示消息已读状态</div><div class="c" style="left:579.95px">msg.read.focus.flag</div><div class="inbox">打开<svg viewBox="0 0 12 12"><path d="M1.5 3.8L6 8.2l4.5-4.4"/></svg></div><div class="c hy" style="left:786.5px">-</div><div class="c hy" style="left:890.5px">-</div><div class="c" style="left:1149px">48</div><div class="ops"><span class="e">编辑</span><span class="d">删除</span></div></div><div class="row" style="top:257px"><div class="c" style="left:10px">是否显示正在输入</div><div class="c" style="left:579.95px">displayInputStatus</div><div class="inbox">打开<svg viewBox="0 0 12 12"><path d="M1.5 3.8L6 8.2l4.5-4.4"/></svg></div><div class="c hy" style="left:786.5px">-</div><div class="c hy" style="left:890.5px">-</div><div class="c" style="left:1149px">47</div><div class="ops"><span class="e">编辑</span><span class="d">删除</span></div></div><div class="row" style="top:308px"><div class="c" style="left:10px">是否显示位置模块</div><div class="c" style="left:579.95px">app.baidumap.is.open.flag</div><div class="inbox">关闭<svg viewBox="0 0 12 12"><path d="M1.5 3.8L6 8.2l4.5-4.4"/></svg></div><div class="c hy" style="left:786.5px">-</div><div class="c" style="left:890.5px">1:开启；2:关闭</div><div class="c" style="left:1149px">46</div><div class="ops"><span class="e">编辑</span><span class="d">删除</span></div></div><div class="row" style="top:359px"><div class="c" style="left:10px">是否启用邀请码功能</div><div class="c" style="left:579.95px">inviteEnable</div><div class="inbox">关闭<svg viewBox="0 0 12 12"><path d="M1.5 3.8L6 8.2l4.5-4.4"/></svg></div><div class="c hy" style="left:786.5px">-</div><div class="c hy" style="left:890.5px">-</div><div class="c" style="left:1149px">45</div><div class="ops"><span class="e">编辑</span><span class="d">删除</span></div></div><div class="row" style="top:410px"><div class="c" style="left:10px">撤回消息时间</div><div class="c" style="left:579.95px">rebackMsgTime</div><div class="inbox num">120</div><div class="c" style="left:786.5px">秒</div><div class="c hy" style="left:890.5px">-</div><div class="c" style="left:1149px">16</div><div class="ops"><span class="e">编辑</span><span class="d">删除</span></div></div><div class="row" style="top:461px"><div class="c" style="left:10px">是否开启音视频</div><div class="c" style="left:579.95px">app.video.is.open.flag</div><div class="inbox">打开<svg viewBox="0 0 12 12"><path d="M1.5 3.8L6 8.2l4.5-4.4"/></svg></div><div class="c hy" style="left:786.5px">-</div><div class="c" style="left:890.5px">1：开启；2:关闭</div><div class="c" style="left:1149px">13</div><div class="ops"><span class="e">编辑</span><span class="d">删除</span></div></div><div class="row" style="top:512px"><div class="c" style="left:10px">是否开启一键登录</div><div class="c" style="left:579.95px">app.one.key.login.is.open.flag</div><div class="inbox">打开<svg viewBox="0 0 12 12"><path d="M1.5 3.8L6 8.2l4.5-4.4"/></svg></div><div class="c hy" style="left:786.5px">-</div><div class="c" style="left:890.5px">1:开启；2:关闭</div><div class="c" style="left:1149px">12</div><div class="ops"><span class="e">编辑</span><span class="d">删除</span></div></div></div></div></div><div class="abs" style="left:1892px;top:0;width:17px;height:922px;background:#fcfcfc"></div>
<svg class="abs" style="left:1894px;top:10px;width:13px;height:9px" viewBox="0 0 13 9"><path d="M6.5 0.5L12.6 8.5H.4z" fill="#8b8b8b"/></svg>
<div class="abs" style="left:1895px;top:29px;width:11px;height:394.5px;border-radius:6px;background:#8b8b8b"></div>
<svg class="abs" style="left:1894px;top:904px;width:13px;height:9px" viewBox="0 0 13 9"><path d="M6.5 8.5L12.6 .5H.4z" fill="#8b8b8b"/></svg>
</div>
<!-- floating system widget -->
<div class="abs" style="left:1719px;top:734px;width:111px;height:50px;border-radius:8px 25px 25px 8px;background:#f4f4f4;box-shadow:0 1px 4px rgba(0,0,0,.3)">
  <svg class="abs" style="left:13px;top:7px;width:9px;height:9px" viewBox="0 0 9 9" fill="none" stroke="#2db34a" stroke-width="1.4"><path d="M4.5.5v7.5M1.2 4.8l3.30 3.30 3.30-3.30"/></svg>
  <div class="abs" style="left:42px;top:7px;font-size:10.5px;line-height:13px;color:#111;font-family:'DejaVu Sans','Liberation Sans',sans-serif;letter-spacing:-.3px">1.2K/s</div>
  <div class="abs" style="left:14px;top:29px;font-size:11.5px;line-height:13px;color:#666;font-family:'DejaVu Sans','Liberation Sans',sans-serif;letter-spacing:-.35px;white-space:nowrap">CPU <span style="color:#3fc06a">51°C</span></div>
  <div class="abs" style="left:82.6px;top:13.4px;width:19.2px;height:19.2px;border-radius:50%;background:#2f8fe9"></div>
  <svg class="abs" style="left:87px;top:17.8px;width:10.4px;height:10.4px" viewBox="0 0 11 11"><path d="M5.5 1v9M1 5.5h9" stroke="#fff" stroke-width="2.20" stroke-linecap="round"/></svg>
  <div class="abs" style="left:99px;top:13.2px;width:7.6px;height:7.6px;border-radius:50%;background:#ee4d2d"></div>
</div>
<div class="abs" style="left:1645px;top:713px;width:80px;height:82px;border-radius:50%;background:rgba(92,216,128,.55);filter:blur(.8px)"></div>
<div class="abs" style="left:1648px;top:719px;width:79px;height:81px;border-radius:50%;background:rgba(92,216,128,.6);filter:blur(.8px)"></div>
<div class="abs" style="left:1647px;top:716px;width:78px;height:80px;border-radius:48% 52% 50% 50%;background:rgba(76,207,114,.8)"></div>
<div class="abs" style="left:1650px;top:720px;width:74px;height:77px;border-radius:50%;background:#4fd074"></div>
<div class="abs" style="left:1655px;top:726.5px;width:64px;height:64px;border-radius:50%;background:#f5f5f5"></div>
<div class="abs" style="left:1666px;top:738px;font-size:27px;line-height:36px;color:#4c4c4c;letter-spacing:.4px;white-space:nowrap;font-family:'Noto Sans CJK SC','Liberation Sans',sans-serif;font-weight:300">45<span style="font-size:12.5px;letter-spacing:0;font-weight:700;font-family:'Liberation Sans',sans-serif;margin-left:.5px">%</span></div>
<div class="abs" style="left:1730px;top:689px;width:38px;height:30px;border-radius:7px;background:linear-gradient(100deg,#2a8ee6 0%,#5b5fe0 50%,#b544dd 100%);color:#fff;font-size:14px;font-weight:700;line-height:31px;text-align:center;box-shadow:0 1px 3px rgba(0,0,0,.2)">AI</div>

</body></html>
